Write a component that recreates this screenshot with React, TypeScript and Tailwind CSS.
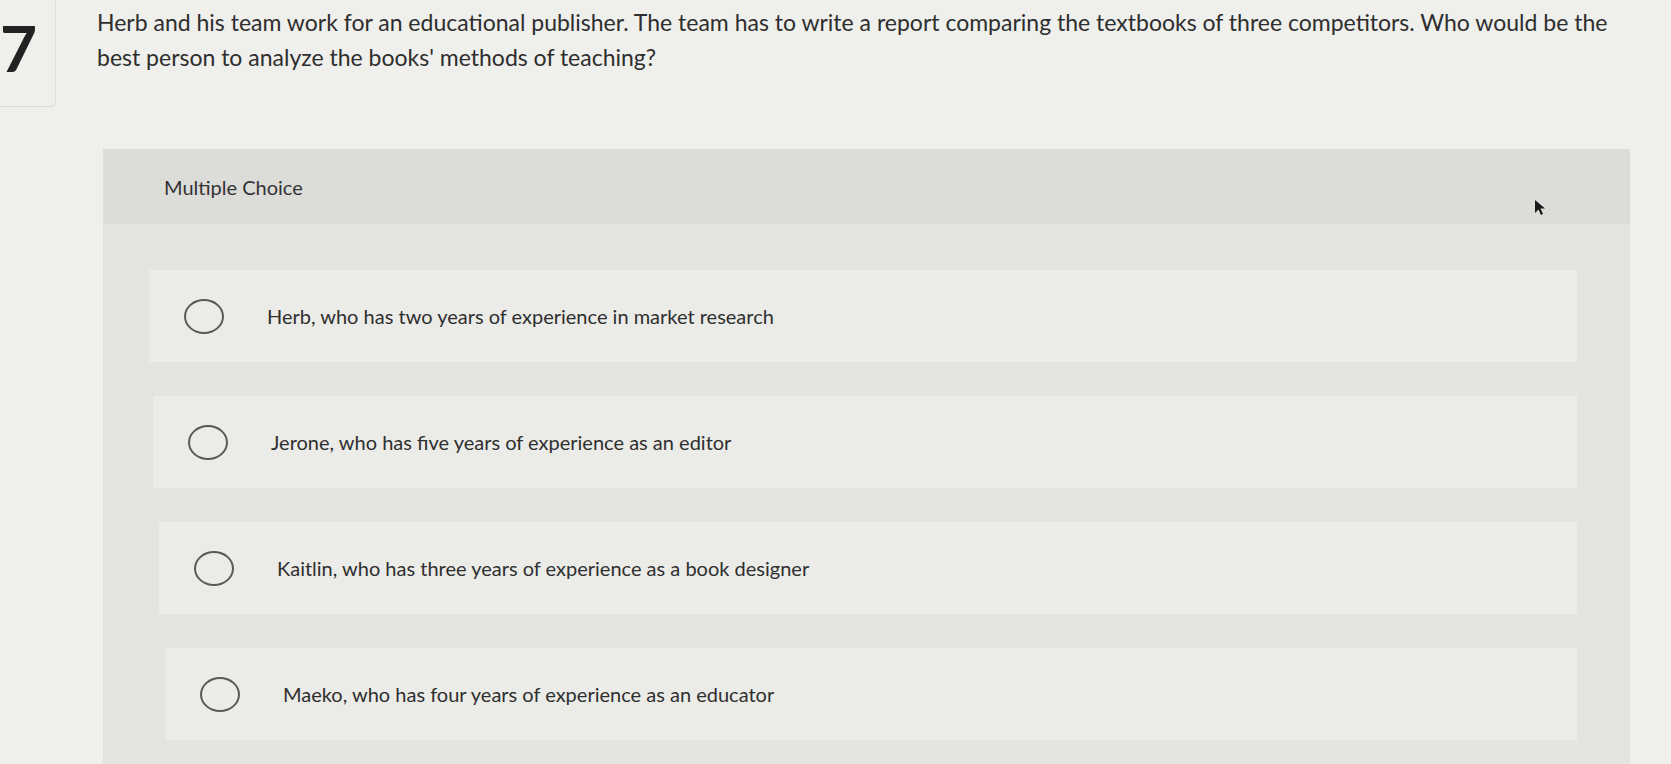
import React from "react";

const options = [
  { text: "Herb, who has two years of experience in market research", shift: "ml-0" },
  { text: "Jerone, who has five years of experience as an editor", shift: "ml-[4px]" },
  { text: "Kaitlin, who has three years of experience as a book designer", shift: "ml-[10px]" },
  { text: "Maeko, who has four years of experience as an educator", shift: "ml-[16px]" },
];

function Cursor() {
  return (
    <svg width="12" height="18" viewBox="0 0 12 18" className="absolute right-[84px] top-[50px]">
      <path d="M1 1 L1 14 L4.5 10.5 L7 16 L9 15 L6.5 9.5 L11 9.5 Z" fill="#1a1a1a" />
    </svg>
  );
}

export default function App() {
  return (
    <div
      className="relative h-[764px] w-full overflow-hidden bg-[#efefec] text-[#2f2f2f]"
      style={{ fontFamily: "Lato, 'Open Sans', sans-serif" }}
    >
      <div className="flex">
        <div className="flex h-[107px] w-[56px] shrink-0 items-start overflow-hidden rounded-br-md border-b border-r border-[#dcdcd9]">
          <span className="ml-0 mt-[16px] text-[64px] font-bold leading-none text-[#222]">7</span>
        </div>
        <p className="ml-[41px] mt-[5px] w-[1535px] text-[23px] leading-[35px] text-[#2e2e2e]">
          Herb and his team work for an educational publisher. The team has to write a report comparing the textbooks of three
          competitors. Who would be the best person to analyze the books' methods of teaching?
        </p>
      </div>

      <div className="relative ml-[103px] mt-[42px] w-[1527px] bg-[#e3e3e0]">
        <div className="flex h-[75px] items-center bg-[#dcdcd9] pl-[61px]">
          <span className="text-[20px] text-[#333]">Multiple Choice</span>
        </div>
        <Cursor />
        <div className="flex flex-col gap-[34px] pb-[40px] pl-[46px] pr-[53px] pt-[46px]">
          {options.map((o) => (
            <div key={o.text} className={`flex h-[92px] items-center bg-[#ebebe8] ${o.shift}`}>
              <div className="ml-[35px] h-[35px] w-[40px] shrink-0 rounded-[50%] border-2 border-[#5a5a5a]" />
              <span className="ml-[43px] text-[20px] text-[#2f2f2f]">{o.text}</span>
            </div>
          ))}
        </div>
      </div>
    </div>
  );
}
